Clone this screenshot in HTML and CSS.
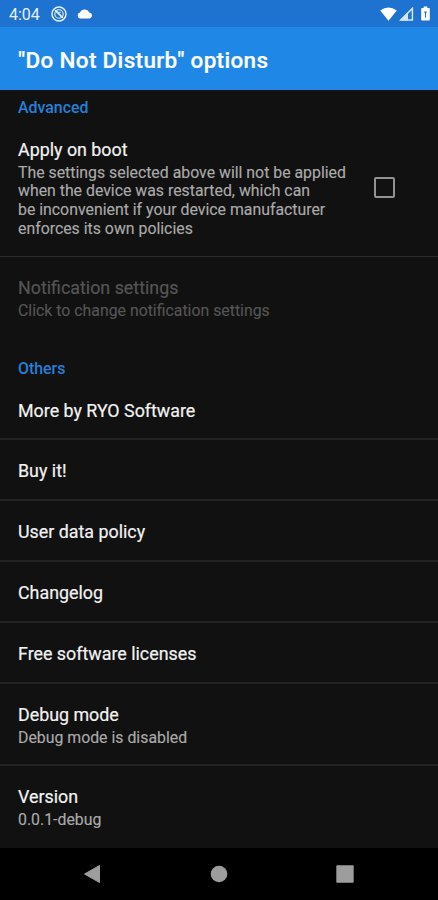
FILE: index.html
```html
<!DOCTYPE html>
<html lang="en">
<head>
<meta charset="utf-8">
<title>"Do Not Disturb" options</title>
<link rel="stylesheet" href="styles.css">
</head>
<body>
<div class="screen">
  <header class="status">
    <span class="clock">4:04</span>
    <svg class="dnd" width="16" height="16" viewBox="0 0 16 16" fill="none" stroke="#e6f0fc"><circle cx="8" cy="8" r="7" stroke-width="1.5"/><circle cx="8" cy="8" r="4.200" stroke-width="1.1"/><path d="M4.2 4.2 11.8 11.8" stroke-width="1.8"/><path d="M7.500 6.300h2.300" stroke-width="1"/></svg>
    <svg class="cloud" width="16" height="10" viewBox="0 0 16 10" fill="#fff"><path d="M3.3 9.5A3 3 0 0 1 3 3.6 5 5 0 0 1 12.2 3.6 3 3 0 0 1 12.8 9.5Z"/></svg>
    <span class="spacer"></span>
    <svg class="wifi" width="17" height="14" viewBox="0 0 17 14" fill="#fff"><path d="M.2 3.600Q8.500-2.800 16.800 3.600L8.500 13.800Z"/></svg>
    <svg class="signal" width="15" height="14" viewBox="0 0 15 14"><path d="M1.900 12.900 13.400 1.400V12.900Z" fill="none" stroke="#d3e5fa" stroke-width="1.500"/><path d="M1 13.400 9 5.400V13.400Z" fill="#d3e5fa"/></svg>
    <svg class="battery" width="9" height="15" viewBox="0 0 9 15"><path d="M2.700.5h3.600V2H8q.8 0 .8.800v10.900q0 .8-.8.800H1q-.8 0-.8-.8V2.800Q.2 2 1 2h1.700Z" fill="#fff"/><path d="M3 5.500h3L5 7.500V11.500H4V7.500Z" fill="#2173cf"/></svg>
  </header>
  <div class="appbar"><h1>"Do Not Disturb" options</h1></div>
  <main class="list">
    <h2 class="category first">Advanced</h2>
    <section class="item with-check">
      <div>
        <div class="title">Apply on boot</div>
        <div class="summary">The settings selected above will not be applied<br>when the device was restarted, which can<br>be inconvenient if your device manufacturer<br>enforces its own policies</div>
      </div>
      <span class="checkbox"></span>
    </section>
    <section class="item disabled">
      <div class="title">Notification settings</div>
      <div class="summary">Click to change notification settings</div>
    </section>
    <h2 class="category">Others</h2>
    <section class="item after-category"><div class="title">More by RYO Software</div></section>
    <section class="item"><div class="title">Buy it!</div></section>
    <section class="item"><div class="title">User data policy</div></section>
    <section class="item"><div class="title">Changelog</div></section>
    <section class="item"><div class="title">Free software licenses</div></section>
    <section class="item two-line"><div class="title">Debug mode</div><div class="summary">Debug mode is disabled</div></section>
    <section class="item last"><div class="title">Version</div><div class="summary">0.0.1-debug</div></section>
  </main>
  <nav class="navbar">
    <svg width="18" height="20" viewBox="0 0 18 20" fill="#9d9d9d"><path d="M1.500 10 16.500 1.500V18.500Z" stroke="#9d9d9d" stroke-linejoin="round"/></svg>
    <svg width="18" height="18" viewBox="0 0 18 18" fill="#9d9d9d"><circle cx="9" cy="9" r="8.300"/></svg>
    <svg width="18" height="18" viewBox="0 0 18 18" fill="#9d9d9d"><rect x=".3" y=".3" width="17.400" height="17.400" rx="1"/></svg>
  </nav>
</div>
</body>
</html>
```
FILE: styles.css
```css
* { box-sizing: border-box; }
body { margin: 0; background: #000; font-family: Roboto, sans-serif; }
.screen { width: 438px; height: 900px; display: flex; flex-direction: column; overflow: hidden; }
.status { height: 27px; flex: none; background: #1f73d0; display: flex; align-items: center; padding: 0 8px 0 9px; color: #e6f0fc; }
.clock { font-size: 16px; line-height: 27px; padding-top: 2px; width: 42px; }
.cloud { margin-left: 10px; }
.spacer { flex: 1; }
.signal { margin-left: 2px; }
.battery { margin-left: 7px; }
.appbar { height: 63px; flex: none; background: #1f87e6; padding: 0 18px; display: flex; align-items: center; }
h1 { margin: 3px 0 0; font-size: 22.500px; letter-spacing: 0.320px; font-weight: 500; color: #fff; line-height: 28px; -webkit-text-stroke: 0.200px; }
.list { height: 758px; flex: none; background: #111; overflow: hidden; }
.category { margin: 0; padding: 20px 18px 0; height: 51px; font-size: 15.900px; line-height: 20px; font-weight: 500; color: #2480d8; }
.first { height: 28.600px; padding-top: 8px; }
.item { border-bottom: 2px solid #232323; padding: 20px 18px 16.850px; color: #f2f2f2; }
.title { font-size: 17.850px; line-height: 22px; white-space: nowrap; -webkit-text-stroke: 0.200px; }
.summary { font-size: 15.850px; line-height: 18.700px; margin-top: 3px; color: #aaa; white-space: nowrap; -webkit-text-stroke: 0.150px; }
.with-check { display: flex; justify-content: space-between; align-items: center; padding-right: 43px; padding-bottom: 17.600px; border-bottom-width: 1px; border-color: #2c2c2c; }
.checkbox { width: 21px; height: 21px; margin-top: -3px; border: 2px solid #929292; border-radius: 2px; }
.disabled { color: #555; border: 0; padding-top: 20px; height: 81.500px; }
.disabled .summary { color: #555; }
.after-category { padding-top: 10px; }
.two-line { padding-bottom: 16.300px; }
.last { border: 0; }
.navbar { height: 52px; background: #000; display: flex; align-items: center; justify-content: space-between; padding: 0 84px 0 83px; }
```
